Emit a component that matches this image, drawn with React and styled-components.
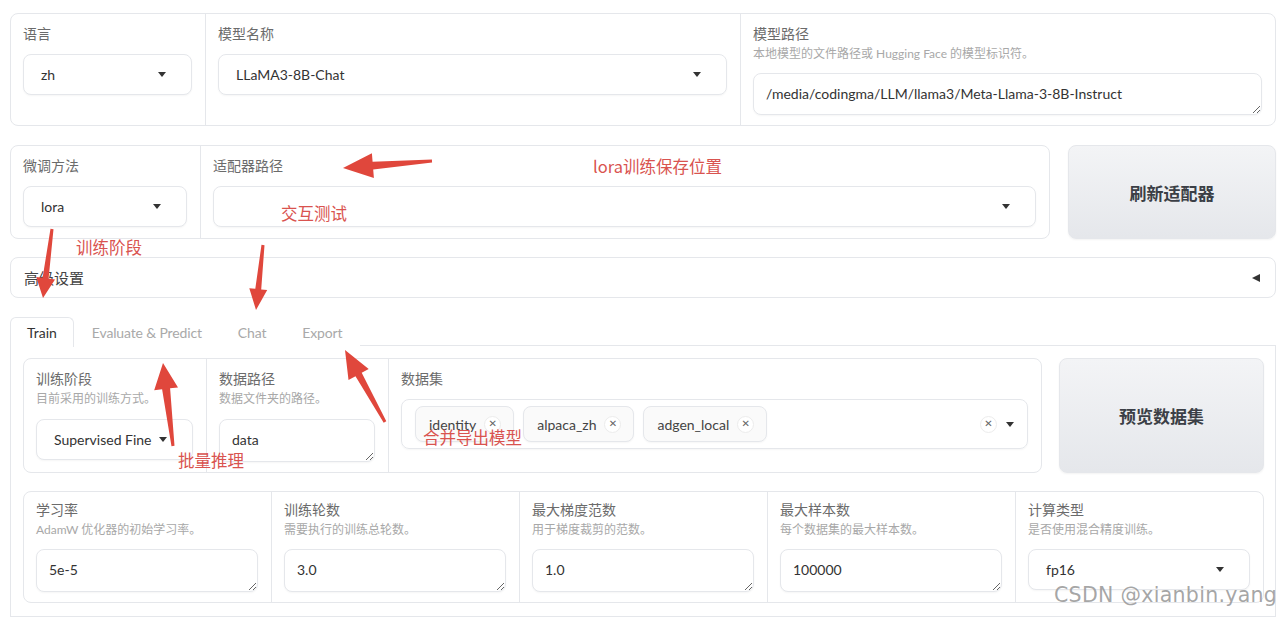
import React from 'react';
import styled, { createGlobalStyle } from 'styled-components';

const GlobalStyle = createGlobalStyle`
  * { box-sizing: border-box; }
  html, body { margin: 0; padding: 0; background: #fff; }
  body {
    font-family: Lato, "Noto Sans CJK SC", sans-serif;
    color: #333;
    overflow: hidden;
  }
`;

const BORDER = '#e5e7eb';

const Page = styled.div`
  position: relative;
  width: 1280px;
  height: 617px;
  overflow: hidden;
  padding: 13px 4px 0 10px;
  display: flex;
  flex-direction: column;
`;

const Row = styled.div`
  display: flex;
  align-items: stretch;
  gap: ${p => p.$gap || 0}px;
  margin-bottom: ${p => p.$mb || 0}px;
  min-height: ${p => (p.$minH ? `${p.$minH}px` : 'auto')};
`;

const Panel = styled.div`
  flex: ${p => (p.$w ? `0 0 ${p.$w}px` : '1 1 0')};
  display: flex;
  border: 1px solid ${BORDER};
  border-radius: 8px;
  background: #fff;
  overflow: hidden;
`;

const Cell = styled.div`
  flex: ${p => (p.$w ? `0 0 ${p.$w}px` : '1 1 0')};
  min-width: 0;
  display: flex;
  flex-direction: column;
  padding: ${p => p.$pt ?? 10}px 13px 10px 12px;
  & + & { border-left: 1px solid ${BORDER}; }
`;

const Label = styled.div`
  font-size: 14px;
  line-height: 20px;
  color: #6b6b6b;
`;

const Info = styled.div`
  font-size: 12px;
  line-height: 20px;
  color: #a8a8a8;
  white-space: nowrap;
`;

const Dropdown = styled.div`
  margin-top: ${p => p.$mt ?? 10}px;
  height: 41px;
  display: flex;
  align-items: center;
  justify-content: space-between;
  padding: 0 25px 0 17px;
  border: 1px solid ${BORDER};
  border-radius: 8px;
  background: #fff;
  box-shadow: 0 1px 2px rgba(0, 0, 0, 0.04);
  font-size: 14px;
  color: #333;
  white-space: nowrap;
`;

const Caret = styled.span`
  flex: 0 0 auto;
  width: 0;
  height: 0;
  border-left: 4px solid transparent;
  border-right: 4px solid transparent;
  border-top: 5px solid #333;
`;

const TextBox = styled.textarea`
  margin-top: ${p => p.$mt ?? 10}px;
  height: ${p => p.$h || 43}px;
  width: 100%;
  resize: vertical;
  padding: 10px 12px;
  border: 1px solid ${BORDER};
  border-radius: 8px;
  background: #fff;
  box-shadow: 0 1px 2px rgba(0, 0, 0, 0.04);
  font-family: Lato, "Noto Sans CJK SC", sans-serif;
  font-size: 14px;
  line-height: 20px;
  color: #333;
  outline: none;
  overflow: hidden;
`;

const BigButton = styled.button`
  flex: 0 0 ${p => p.$w}px;
  border: 1px solid ${BORDER};
  border-radius: 8px;
  background: linear-gradient(180deg, #f3f4f6 0%, #e5e7eb 100%);
  box-shadow: 0 1px 2px rgba(0, 0, 0, 0.05);
  font-family: "Noto Sans CJK SC", sans-serif;
  font-size: 17px;
  font-weight: 700;
  color: #3b3f46;
  cursor: pointer;
`;

const Accordion = styled.div`
  height: 41px;
  display: flex;
  align-items: center;
  justify-content: space-between;
  padding: 0 15px 0 13px;
  border: 1px solid ${BORDER};
  border-radius: 8px;
  margin-bottom: 19px;
  font-size: 15px;
  color: #444;
`;

const LeftTri = styled.span`
  width: 0;
  height: 0;
  border-top: 4.5px solid transparent;
  border-bottom: 4.5px solid transparent;
  border-right: 8px solid #333;
`;

const TabBar = styled.div`
  display: flex;
  height: 29px;
  border-bottom: 1px solid ${BORDER};
`;

const Tab = styled.div`
  padding: 0 ${p => (p.$active ? 16 : 17)}px;
  display: flex;
  align-items: center;
  font-size: 14px;
  letter-spacing: ${p => (p.$active ? 0 : -0.15)}px;
  color: ${p => (p.$active ? '#333' : '#a9a9a9')};
  background: #fff;
  border: 1px solid ${p => (p.$active ? BORDER : 'transparent')};
  border-bottom: none;
  border-radius: 6px 6px 0 0;
  margin-bottom: ${p => (p.$active ? -1 : 0)}px;
  height: ${p => (p.$active ? 30 : 29)}px;
`;

const TabPanel = styled.div`
  flex: 1;
  border: 1px solid ${BORDER};
  border-top: none;
  padding: 12px 11px 0 12px;
`;

const MultiBox = styled.div`
  margin-top: 10px;
  height: 50px;
  display: flex;
  align-items: center;
  gap: 9px;
  padding: 0 13px;
  border: 1px solid ${BORDER};
  border-radius: 8px;
  box-shadow: 0 1px 2px rgba(0, 0, 0, 0.04);
`;

const Chip = styled.div`
  height: 36px;
  display: flex;
  align-items: center;
  gap: 8px;
  padding: 0 12px 0 13px;
  border: 1px solid ${BORDER};
  border-radius: 8px;
  background: #fafafa;
  box-shadow: 0 1px 2px rgba(0, 0, 0, 0.04);
  font-size: 14px;
  color: #444;
`;

const XCircle = styled.span`
  width: 17px;
  height: 17px;
  border-radius: 50%;
  border: 1px solid #ececec;
  background: #fff;
  display: inline-flex;
  align-items: center;
  justify-content: center;
  font-family: "DejaVu Sans", sans-serif;
  font-size: 10px;
  line-height: 1;
  color: #666;
`;

const Spacer = styled.div`
  flex: 1;
`;

const Overlay = styled.svg`
  position: absolute;
  left: 0;
  top: 0;
  pointer-events: none;
`;

const Annot = styled.span`
  position: absolute;
  white-space: nowrap;
  font-family: "Noto Sans CJK SC", sans-serif;
  font-size: 16.5px;
  line-height: 20px;
  color: #d9534f;
  pointer-events: none;
`;

const Watermark = styled.span`
  position: absolute;
  white-space: nowrap;
  left: 1054px;
  top: 583px;
  font-family: "DejaVu Sans", sans-serif;
  font-size: 20.5px;
  line-height: 24px;
  letter-spacing: 0.3px;
  color: rgba(150, 150, 150, 0.85);
  pointer-events: none;
`;

function arrowPoints(x1, y1, x2, y2, L, W, t0, t1) {
  const dx = x2 - x1;
  const dy = y2 - y1;
  const len = Math.hypot(dx, dy);
  const ux = dx / len;
  const uy = dy / len;
  const nx = -uy;
  const ny = ux;
  const bx = x2 - ux * L;
  const by = y2 - uy * L;
  const pts = [
    [x1 + (nx * t0) / 2, y1 + (ny * t0) / 2],
    [bx + (nx * t1) / 2, by + (ny * t1) / 2],
    [bx + (nx * W) / 2, by + (ny * W) / 2],
    [x2, y2],
    [bx - (nx * W) / 2, by - (ny * W) / 2],
    [bx - (nx * t1) / 2, by - (ny * t1) / 2],
    [x1 - (nx * t0) / 2, y1 - (ny * t0) / 2],
  ];
  return pts.map(p => `${p[0].toFixed(1)},${p[1].toFixed(1)}`).join(' ');
}

const arrows = [
  [432, 161, 343, 168, 30, 25, 3, 8],
  [52, 229, 43, 298, 20, 19, 3, 6],
  [263, 245, 256, 310, 21, 18, 3, 6],
  [173, 446, 163, 363, 26, 24, 3, 8],
  [385, 422, 345, 350, 28, 23, 3, 7],
];

const Field = ({ label, info, children, w, pt }) => (
  <Cell $w={w} $pt={pt}>
    <Label>{label}</Label>
    {info && <Info>{info}</Info>}
    {children}
  </Cell>
);

const Select = ({ value, mt }) => (
  <Dropdown $mt={mt}>
    <span>{value}</span>
    <Caret />
  </Dropdown>
);

export default function App() {
  return (
    <>
      <GlobalStyle />
      <Page>
        <Row $mb={19}>
          <Panel>
            <Field label="语言" w={194}>
              <Select value="zh" />
            </Field>
            <Field label="模型名称">
              <Select value="LLaMA3-8B-Chat" />
            </Field>
            <Field label="模型路径" info="本地模型的文件路径或 Hugging Face 的模型标识符。">
              <TextBox $h={42} $mt={9} readOnly defaultValue="/media/codingma/LLM/llama3/Meta-Llama-3-8B-Instruct" />
            </Field>
          </Panel>
        </Row>

        <Row $mb={18} $gap={18} $minH={94}>
          <Panel>
            <Field label="微调方法" w={189}>
              <Select value="lora" />
            </Field>
            <Field label="适配器路径">
              <Select value="" />
            </Field>
          </Panel>
          <BigButton $w={208}>刷新适配器</BigButton>
        </Row>

        <Accordion>
          <span>高级设置</span>
          <LeftTri />
        </Accordion>

        <TabBar>
          <Tab $active>Train</Tab>
          <Tab>Evaluate &amp; Predict</Tab>
          <Tab>Chat</Tab>
          <Tab>Export</Tab>
        </TabBar>

        <TabPanel>
          <Row $mb={18} $gap={17}>
            <Panel>
              <Field label="训练阶段" info="目前采用的训练方式。" w={182}>
                <Select value="Supervised Fine" />
              </Field>
              <Field label="数据路径" info="数据文件夹的路径。" w={182}>
                <TextBox readOnly defaultValue="data" />
              </Field>
              <Field label="数据集">
                <MultiBox>
                  <Chip>identity<XCircle>✕</XCircle></Chip>
                  <Chip>alpaca_zh<XCircle>✕</XCircle></Chip>
                  <Chip>adgen_local<XCircle>✕</XCircle></Chip>
                  <Spacer />
                  <XCircle>✕</XCircle>
                  <Caret />
                </MultiBox>
              </Field>
            </Panel>
            <BigButton $w={205}>预览数据集</BigButton>
          </Row>

          <Row>
            <Panel>
              <Field label="学习率" info="AdamW 优化器的初始学习率。" pt={8}>
                <TextBox $mt={9} readOnly defaultValue="5e-5" />
              </Field>
              <Field label="训练轮数" info="需要执行的训练总轮数。" pt={8}>
                <TextBox $mt={9} readOnly defaultValue="3.0" />
              </Field>
              <Field label="最大梯度范数" info="用于梯度裁剪的范数。" pt={8}>
                <TextBox $mt={9} readOnly defaultValue="1.0" />
              </Field>
              <Field label="最大样本数" info="每个数据集的最大样本数。" pt={8}>
                <TextBox $mt={9} readOnly defaultValue="100000" />
              </Field>
              <Field label="计算类型" info="是否使用混合精度训练。" pt={8}>
                <Select value="fp16" mt={9} />
              </Field>
            </Panel>
          </Row>
        </TabPanel>

        <Overlay width="1280" height="617" viewBox="0 0 1280 617">
          {arrows.map((a, i) => (
            <polygon key={i} points={arrowPoints(...a)} fill="#e0473c" />
          ))}
        </Overlay>

        <Annot style={{ left: 593, top: 156 }}>lora训练保存位置</Annot>
        <Annot style={{ left: 281, top: 203 }}>交互测试</Annot>
        <Annot style={{ left: 76, top: 237 }}>训练阶段</Annot>
        <Annot style={{ left: 178, top: 450 }}>批量推理</Annot>
        <Annot style={{ left: 423, top: 427 }}>合并导出模型</Annot>
        <Watermark>CSDN @xianbin.yang</Watermark>
      </Page>
    </>
  );
}
